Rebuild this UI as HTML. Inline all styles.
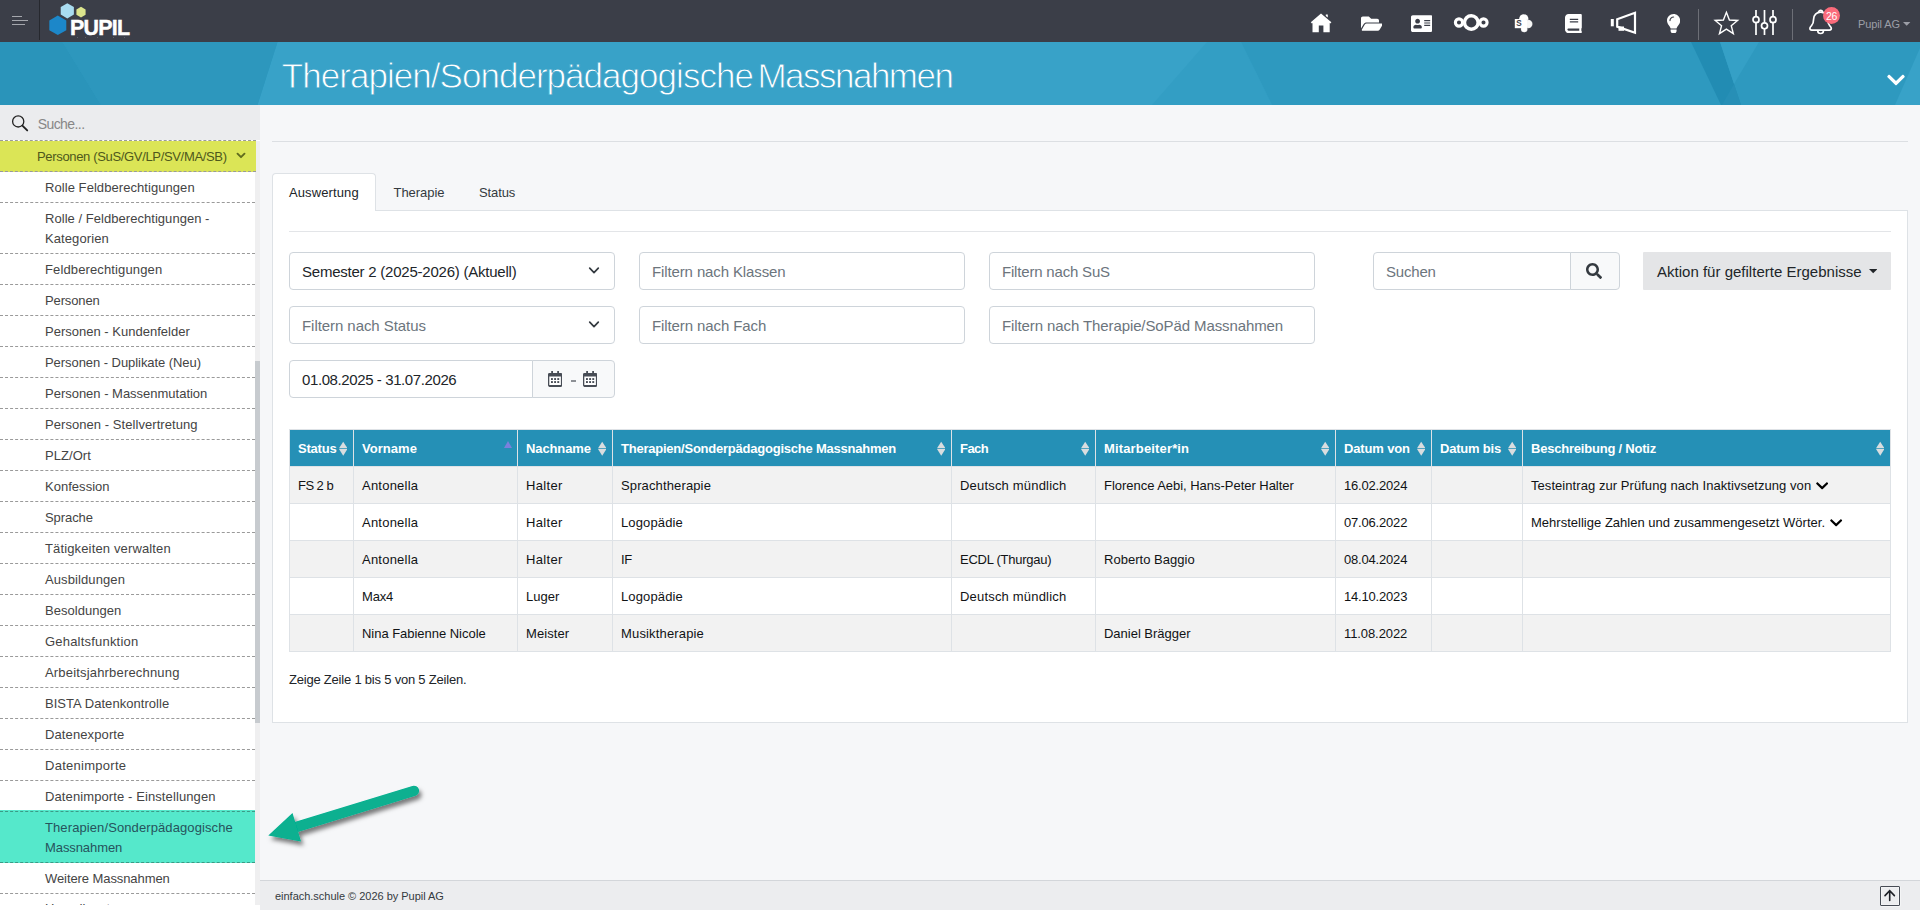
<!DOCTYPE html>
<html lang="de"><head><meta charset="utf-8"><title>Therapien/Sonderpädagogische Massnahmen</title>
<style>
*{box-sizing:border-box;margin:0;padding:0}
html,body{width:1920px;height:911px;overflow:hidden;background:#fff;font-family:"Liberation Sans",sans-serif}
body{font-family:"Liberation Sans",sans-serif;font-size:13px;color:#212529;position:relative}
.ab{position:absolute}
.t{position:absolute;white-space:nowrap;line-height:20px}
#nav{position:absolute;left:0;top:0;width:1920px;height:42px;background:#3b3e48}
#banner{position:absolute;left:0;top:42px;width:1920px;height:63px;background:#2f9ac0;overflow:hidden}
#side{position:absolute;left:0;top:105px;width:260px;height:800px;background:#fff;overflow:hidden}
#main{position:absolute;left:260px;top:105px;width:1660px;height:775px;background:#f6f7f9}
#footer{position:absolute;left:260px;top:880px;width:1660px;height:30px;background:#ecedef;border-top:1px solid #d3d6da}
.si{position:absolute;left:0;width:255px;border-bottom:1px dashed #9a9a9a;color:#444;font-size:13px;line-height:20px;padding:6px 0 4px 45px}
.inp{position:absolute;height:38px;background:#fff;border:1px solid #ced4da;border-radius:4px;font-size:15px;line-height:37.5px;padding-left:12px;white-space:nowrap;letter-spacing:-.1px;overflow:hidden}
.ph{color:#6c757d}
.th{position:absolute;top:430px;height:36px;background:#2590b6;color:#fff;font-weight:700;font-size:13px;line-height:38px;padding-left:8px;white-space:nowrap;overflow:hidden}
.td{position:absolute;height:36px;font-size:13px;line-height:38px;padding-left:8px;white-space:nowrap;color:#111315;overflow:hidden}
.vl{position:absolute;width:1px;background:#dee2e6}
.hl{position:absolute;height:1px;background:#dee2e6}
</style></head><body>

<div id="nav">
<div class="ab" style="left:12px;top:16px;width:10px;height:1px;background:#a5a7ad"></div>
<div class="ab" style="left:12px;top:20px;width:16px;height:1px;background:#a5a7ad"></div>
<div class="ab" style="left:12px;top:24px;width:13px;height:1px;background:#a5a7ad"></div>
<div class="ab" style="left:39px;top:0;width:1px;height:40px;background:#26282e"></div>
<svg class="ab" style="left:0;top:0;width:160px;height:42px" viewBox="0 0 160 42"><polygon points="67.30,3.20 73.88,7.00 73.88,14.60 67.30,18.40 60.72,14.60 60.72,7.00" fill="#a9dcf0"/><polygon points="81.00,6.80 85.59,9.45 85.59,14.75 81.00,17.40 76.41,14.75 76.41,9.45" fill="#dce58d"/><polygon points="57.80,15.50 66.29,20.40 66.29,30.20 57.80,35.10 49.31,30.20 49.31,20.40" fill="#1c87c9"/></svg>
<div class="t" style="left:70px;top:16.200px;font-size:21.400px;font-weight:700;color:#fff;line-height:24px;letter-spacing:-.75px;-webkit-text-stroke:.45px #fff">PUPIL</div>
<div class="ab" style="left:76.5px;top:37px;width:1px;height:1.200px;background:#5d606a"></div>
<div class="ab" style="left:85px;top:37px;width:1px;height:1.200px;background:#5d606a"></div>
<div class="ab" style="left:96.5px;top:37px;width:1px;height:1.200px;background:#5d606a"></div>
<div class="ab" style="left:112.5px;top:37px;width:1px;height:1.200px;background:#5d606a"></div>
<div class="ab" style="left:124px;top:37px;width:1px;height:1.200px;background:#5d606a"></div>
<svg class="ab" style="left:1309px;top:12px;width:24px;height:22px" viewBox="0 0 24 22"><path fill="#fff" d="M12 1.400 L22.400 10.300 L21.300 11.600 L20.700 11.100 V20.300 H14.400 V13.400 H9.800 V20.300 H3.500 V11.100 L2.900 11.600 L1.800 10.300 Z M16.800 2.600 H18.800 V5.600 L16.800 3.900 Z"/></svg>
<svg class="ab" style="left:1360.8px;top:13.9px;width:21.6px;height:19.2px" viewBox="0 0 576 512" preserveAspectRatio="none" ><path fill="#fff" d="M572.694 292.093L500.270 416.248A63.997 63.997 0 0 1 444.989 448H45.025c-18.523 0-30.064-20.093-20.731-36.093l72.424-124.155A64 64 0 0 1 152 256h399.964c18.523 0 30.064 20.093 20.730 36.093zM152 224h328v-48c0-26.510-21.490-48-48-48H272l-64-64H48C21.490 64 0 85.490 0 112v278.046l69.077-118.418C86.214 242.250 117.989 224 152 224z"/></svg>
<svg class="ab" style="left:1410.8px;top:14.0px;width:21.6px;height:19.2px" viewBox="0 0 576 512" preserveAspectRatio="none" ><path fill="#fff" d="M528 32H48C21.500 32 0 53.500 0 80v352c0 26.500 21.500 48 48 48h480c26.500 0 48-21.500 48-48V80c0-26.500-21.500-48-48-48zm-352 96c35.300 0 64 28.700 64 64s-28.700 64-64 64-64-28.700-64-64 28.700-64 64-64zm112 236.800c0 10.600-10 19.200-22.400 19.200H86.400C74 384 64 375.400 64 364.800v-19.200c0-31.800 30.100-57.600 67.200-57.600h5c12.300 5.100 25.700 8 39.800 8s27.600-2.900 39.800-8h5c37.100 0 67.200 25.800 67.200 57.600v19.200zM512 312c0 4.400-3.600 8-8 8H360c-4.400 0-8-3.600-8-8v-16c0-4.400 3.600-8 8-8h144c4.400 0 8 3.600 8 8v16zm0-64c0 4.400-3.600 8-8 8H360c-4.400 0-8-3.600-8-8v-16c0-4.400 3.600-8 8-8h144c4.400 0 8 3.600 8 8v16zm0-64c0 4.400-3.600 8-8 8H360c-4.400 0-8-3.600-8-8v-16c0-4.400 3.600-8 8-8h144c4.400 0 8 3.600 8 8v16z"/></svg>
<svg class="ab" style="left:1450px;top:10px;width:42px;height:25px" viewBox="0 0 42 25"><g fill="none" stroke="#fff"><circle cx="21.3" cy="12.5" r="6.8" stroke-width="3.4"/><circle cx="9" cy="12.5" r="3.6" stroke-width="3.1"/><circle cx="33.5" cy="12.5" r="3.6" stroke-width="3.1"/></g></svg>
<svg class="ab" style="left:1512px;top:12px;width:24px;height:24px" viewBox="0 0 24 24"><circle cx="11.8" cy="6.8" r="4.6" fill="#fff"/><circle cx="16.3" cy="12" r="4.2" fill="#f6f6f6" stroke="#3b3e48" stroke-opacity=".22" stroke-width=".5"/><circle cx="12.2" cy="17" r="3.3" fill="#fff" stroke="#3b3e48" stroke-opacity=".22" stroke-width=".5"/><rect x="2.8" y="7" width="7.6" height="9.2" fill="#fff"/><rect x="9" y="8" width="6" height="8" fill="#fff"/><text x="6.9" y="14.1" font-family="Liberation Sans" font-weight="700" font-size="8.2" fill="#3b3e48" text-anchor="middle">S</text></svg>
<svg class="ab" style="left:1565.3px;top:13.6px;width:16.8px;height:19.2px" viewBox="0 0 448 512" preserveAspectRatio="none" ><path fill="#fff" d="M448 360V24c0-13.300-10.700-24-24-24H96C43 0 0 43 0 96v320c0 53 43 96 96 96h328c13.300 0 24-10.700 24-24v-16c0-7.500-3.500-14.300-8.900-18.700-4.200-15.400-4.200-59.300 0-74.700 5.400-4.300 8.900-11.100 8.900-18.600zM128 134c0-3.300 2.700-6 6-6h212c3.300 0 6 2.700 6 6v20c0 3.300-2.700 6-6 6H134c-3.300 0-6-2.700-6-6v-20zm0 64c0-3.300 2.700-6 6-6h212c3.300 0 6 2.700 6 6v20c0 3.300-2.700 6-6 6H134c-3.300 0-6-2.700-6-6v-20zm253.400 250H96c-17.700 0-32-14.300-32-32 0-17.600 14.400-32 32-32h285.400c-1.900 17.100-1.900 46.900 0 64z"/></svg>
<svg class="ab" style="left:1608px;top:9px;width:32px;height:28px" viewBox="0 0 32 28"><g fill="none" stroke="#fff" stroke-width="2.2" stroke-linejoin="miter"><path d="M9.2 10.3 L27 3.8 V23.8 L9.2 17.6 Z"/></g><rect x="2.8" y="10" width="3" height="7.3" fill="#fff"/><rect x="10.5" y="17.5" width="5.5" height="4.3" fill="#fff"/></svg>
<svg class="ab" style="left:1666.8px;top:13.7px;width:13.2px;height:19.2px" viewBox="0 0 352 512" preserveAspectRatio="none" ><path fill="#fff" d="M96.060 454.350c.01 6.290 1.870 12.450 5.360 17.690l17.090 25.690a31.990 31.990 0 0 0 26.640 14.280h61.710a31.990 31.990 0 0 0 26.640-14.280l17.090-25.690a31.989 31.989 0 0 0 5.360-17.690l.04-38.350H96.010l.05 38.350zM0 176c0 44.370 16.450 84.850 43.560 115.780 16.520 18.850 42.360 58.230 52.210 91.450.04.26.07.52.11.78h160.240c.04-.26.07-.51.11-.78 9.850-33.220 35.690-72.600 52.210-91.450C335.550 260.850 352 220.370 352 176 352 78.610 272.910-.3 175.450 0 73.440.31 0 82.970 0 176zm176-80c-44.110 0-80 35.890-80 80 0 8.840-7.160 16-16 16s-16-7.160-16-16c0-61.760 50.240-112 112-112 8.840 0 16 7.160 16 16s-7.160 16-16 16z"/></svg>
<div class="ab" style="left:1698px;top:9px;width:1px;height:31px;background:#6d6f77"></div>
<svg class="ab" style="left:1710px;top:6px;width:34px;height:34px" viewBox="0 0 34 34"><polygon points="16.40,6.30 19.40,13.97 27.62,14.45 21.25,19.68 23.34,27.65 16.40,23.20 9.46,27.65 11.55,19.68 5.18,14.45 13.40,13.97" fill="none" stroke="#fff" stroke-width="1.4" stroke-linejoin="miter"/></svg>
<svg class="ab" style="left:1750px;top:6px;width:30px;height:32px" viewBox="0 0 30 32"><g stroke="#fff" stroke-width="1.7" fill="#3b3e48"><path d="M6 4 V29 M14.5 4 V29 M23 4 V29" fill="none"/><circle cx="6" cy="13.7" r="3"/><circle cx="14.5" cy="19.8" r="3"/><circle cx="23" cy="13.7" r="3"/></g></svg>
<div class="ab" style="left:1792px;top:9px;width:1px;height:31px;background:#6d6f77"></div>
<svg class="ab" style="left:1806px;top:6px;width:30px;height:32px" viewBox="0 0 30 32"><g fill="none" stroke="#fff" stroke-width="1.700" stroke-linejoin="round" stroke-linecap="round"><path d="M3.900 22.300 C3.900 21.200 4.600 20.600 5.400 19.800 C7 18.200 7.600 16.400 7.600 13.200 C7.600 8.800 10.600 6.200 14.600 6.200 C18.600 6.200 21.600 8.800 21.600 13.200 C21.600 16.400 22.200 18.200 23.800 19.800 C24.600 20.600 25.300 21.200 25.300 22.300 C25.300 23.600 24.400 24.200 23.400 24.200 H5.800 C4.800 24.200 3.900 23.600 3.900 22.300 Z"/><path d="M12.700 6.300 C12.700 3.600 16.500 3.600 16.500 6.300"/><path d="M11.800 25 C11.900 28.300 17.300 28.300 17.400 25"/></g></svg>
<div class="ab" style="left:1823px;top:7px;width:17px;height:17px;border-radius:50%;background:#fa6b7b"></div>
<div class="t" style="left:1823px;top:7.800px;width:17px;text-align:center;font-size:10.500px;color:#fff;line-height:17px;letter-spacing:-.3px">26</div>
<div class="t" style="left:1858px;top:14px;font-size:11px;color:#9c9ea7;line-height:20px;letter-spacing:-.12px">Pupil AG</div>
<svg class="ab" style="left:1903px;top:22px;width:8px;height:4px" viewBox="0 0 8 4"><polygon points="0,0 7.4,0 3.700,3.800" fill="#9c9ea7"/></svg>
</div>
<div id="banner"><svg class="ab" style="left:0;top:0;width:1920px;height:63px" viewBox="0 0 1920 63"><polygon points="257.500,63 277.500,0 1920,0 1920,63" fill="#38a2c8"/><polygon points="0,0 62.500,0 101,63 0,63" fill="#2a94ba"/><polygon points="62.500,0 277.500,0 257.500,63 101,63" fill="#2d97bd"/><polygon points="1207,0 1241,0 1272,63 1152,63" fill="#339ec4"/><polygon points="1241,0 1920,0 1920,63 1272,63" fill="#2e99bf"/><polygon points="1691,0 1720,0 1741,63 1721,63" fill="#228cb3"/><polygon points="1720,0 1759,0 1734,42" fill="#35a0c6"/><polygon points="1734,42 1741,63 1722,63" fill="#278fb6"/><polygon points="1920,6 1920,63 1895,63" fill="#38a2c8"/></svg>
<div class="t" style="left:281.800px;top:14px;font-size:35px;line-height:40px;color:#fff;letter-spacing:-0.963px;-webkit-text-stroke:.85px #38a2c8">Therapien/Sonderpädagogische</div>
<div class="t" style="left:757.400px;top:14px;font-size:35px;line-height:40px;color:#fff;letter-spacing:-1.511px;-webkit-text-stroke:.85px #38a2c8">Massnahmen</div>
<svg class="ab" style="left:1887px;top:27.5px;width:18px;height:20px" viewBox="0 0 448 512" preserveAspectRatio="none" ><path fill="#fff" d="M207.029 381.476L12.686 187.132c-9.373-9.373-9.373-24.569 0-33.941l22.667-22.667c9.357-9.357 24.522-9.375 33.901-.04L224 284.505l154.745-154.021c9.379-9.335 24.544-9.317 33.901.04l22.667 22.667c9.373 9.373 9.373 24.569 0 33.941L240.971 381.476c-9.373 9.372-24.569 9.372-33.942 0z"/></svg>
</div>
<div id="side">
<div class="ab" style="left:0;top:0;width:260px;height:35px;background:#ebecee"></div>
<div class="ab" style="left:0;top:35px;width:256px;height:1px;border-top:1px dashed #9a9a9a"></div>
<svg class="ab" style="left:10px;top:8px;width:20px;height:20px" viewBox="0 0 20 20"><circle cx="8.2" cy="8.400" r="5.600" fill="none" stroke="#222" stroke-width="1.3"/><path d="M12.400 12.600 L17.200 17.400" stroke="#222" stroke-width="1.900" stroke-linecap="round"/></svg>
<div class="t" style="left:37.700px;top:8.600px;font-size:14px;color:#878787;letter-spacing:-0.571px">Suche...</div>
<div class="ab" style="left:255px;top:36px;width:5px;height:764px;background:#efeff0"></div>
<div class="ab" style="left:255px;top:256px;width:5px;height:362px;background:#c7cbcf"></div>
<div class="si" style="top:36px;width:256px;background:#dbe556;color:#4e581c;padding-left:37px"><span style="letter-spacing:-0.337px">Personen (SuS/GV/LP/SV/MA/SB)</span></div>
<svg class="ab" style="left:235px;top:46px;width:12px;height:10px" viewBox="0 0 12 10"><path d="M2.500 2.700 L6 6.200 L9.500 2.700" fill="none" stroke="#606b1e" stroke-width="1.900" stroke-linecap="round" stroke-linejoin="round"/></svg>
<div class="si" style="top:67px"><span style="letter-spacing:0.064px">Rolle Feldberechtigungen</span></div>
<div class="si" style="top:98px"><span style="letter-spacing:0.042px">Rolle / Feldberechtigungen -</span><br><span style="letter-spacing:0.092px">Kategorien</span></div>
<div class="si" style="top:149px"><span style="letter-spacing:0.132px">Feldberechtigungen</span></div>
<div class="si" style="top:180px"><span style="letter-spacing:-0.119px">Personen</span></div>
<div class="si" style="top:211px"><span style="letter-spacing:0.011px">Personen - Kundenfelder</span></div>
<div class="si" style="top:242px"><span style="letter-spacing:-0.059px">Personen - Duplikate (Neu)</span></div>
<div class="si" style="top:273px"><span style="letter-spacing:-0.011px">Personen - Massenmutation</span></div>
<div class="si" style="top:304px"><span style="letter-spacing:0.057px">Personen - Stellvertretung</span></div>
<div class="si" style="top:335px"><span style="letter-spacing:0.056px">PLZ/Ort</span></div>
<div class="si" style="top:366px"><span style="letter-spacing:0.028px">Konfession</span></div>
<div class="si" style="top:397px"><span style="letter-spacing:-0.075px">Sprache</span></div>
<div class="si" style="top:428px"><span style="letter-spacing:0.141px">Tätigkeiten verwalten</span></div>
<div class="si" style="top:459px"><span style="letter-spacing:0.101px">Ausbildungen</span></div>
<div class="si" style="top:490px"><span style="letter-spacing:0.045px">Besoldungen</span></div>
<div class="si" style="top:521px"><span style="letter-spacing:0.204px">Gehaltsfunktion</span></div>
<div class="si" style="top:552px"><span style="letter-spacing:0.18px">Arbeitsjahrberechnung</span></div>
<div class="si" style="top:583px"><span style="letter-spacing:0.044px">BISTA Datenkontrolle</span></div>
<div class="si" style="top:614px"><span style="letter-spacing:0.112px">Datenexporte</span></div>
<div class="si" style="top:645px"><span style="letter-spacing:0.272px">Datenimporte</span></div>
<div class="si" style="top:676px"><span style="letter-spacing:0.105px">Datenimporte - Einstellungen</span></div>
<div class="si" style="top:705px;height:53px;padding-top:8px;background:#55e8cb;color:#27535c;border-bottom-color:#3c9a86"><span style="letter-spacing:0.102px">Therapien/Sonderpädagogische</span><br><span style="letter-spacing:-0.084px">Massnahmen</span><div class="ab" style="left:0;top:1px;width:255px;height:0;border-top:1px dashed #3c9a86"></div></div>
<div class="si" style="top:758px"><span style="letter-spacing:-0.084px">Weitere Massnahmen</span></div>
<div class="si" style="top:789px;padding-top:4.600px">Hausdienst</div>
</div>
<div id="main"></div>
<div class="hl" style="left:272px;top:141px;width:1636px;background:#dcdfe3"></div>
<div class="ab" style="left:272px;top:210px;width:1636px;height:513px;background:#fff;border:1px solid #dee2e6"></div>
<div class="ab" style="left:272px;top:173px;width:104px;height:38px;background:#fff;border:1px solid #dee2e6;border-bottom:none;border-radius:4px 4px 0 0"></div>
<div class="t" style="left:289px;top:183px;font-size:13px;color:#212529;letter-spacing:.11px">Auswertung</div>
<div class="t" style="left:393.500px;top:183px;font-size:13px;color:#343a40;letter-spacing:-.05px">Therapie</div>
<div class="t" style="left:479px;top:183px;font-size:13px;color:#343a40;letter-spacing:-.11px">Status</div>
<div class="hl" style="left:289px;top:231px;width:1602px;background:#e3e5e8"></div>
<div class="inp" style="left:289px;top:252px;width:326px;letter-spacing:-0.23px">Semester 2 (2025-2026) (Aktuell)</div>
<div class="inp ph" style="left:639px;top:252px;width:326px;letter-spacing:-0.12px">Filtern nach Klassen</div>
<div class="inp ph" style="left:989px;top:252px;width:326px;letter-spacing:-0.19px">Filtern nach SuS</div>
<div class="inp ph" style="left:289px;top:306px;width:326px;letter-spacing:-0.06px">Filtern nach Status</div>
<div class="inp ph" style="left:639px;top:306px;width:326px;letter-spacing:-0.1px">Filtern nach Fach</div>
<div class="inp ph" style="left:989px;top:306px;width:326px;letter-spacing:-0.1px">Filtern nach Therapie/SoPäd Massnahmen</div>
<div class="inp" style="left:289px;top:360px;width:244px;letter-spacing:-0.4px;border-radius:4px 0 0 4px">01.08.2025 - 31.07.2026</div>
<div class="ab" style="left:532px;top:360px;width:83px;height:38px;background:#f8f9fa;border:1px solid #ced4da;border-radius:0 4px 4px 0"></div>
<svg class="ab" style="left:548px;top:371px;width:14.200px;height:16px" viewBox="0 0 14.200 16"><rect x="0.650" y="2.650" width="12.900" height="12.600" rx="1.300" fill="#fff" stroke="#484d56" stroke-width="1.300"/><path d="M0 5.400 V3.500 Q0 2 1.500 2 H12.700 Q14.200 2 14.200 3.500 V5.400 Z" fill="#484d56"/><rect x="3.200" y="0" width="1.800" height="3" fill="#484d56"/><rect x="9.200" y="0" width="1.800" height="3" fill="#484d56"/><rect x="0.600" y="14" width="13" height="1.800" rx=".8" fill="#484d56"/><rect x="3" y="7.1" width="1.900" height="1.900" fill="#484d56"/><rect x="3" y="10.1" width="1.900" height="1.900" fill="#484d56"/><rect x="6.15" y="7.1" width="1.900" height="1.900" fill="#484d56"/><rect x="6.15" y="10.1" width="1.900" height="1.900" fill="#484d56"/><rect x="9.3" y="7.1" width="1.900" height="1.900" fill="#484d56"/><rect x="9.3" y="10.1" width="1.900" height="1.900" fill="#484d56"/></svg>
<svg class="ab" style="left:583px;top:371px;width:14.200px;height:16px" viewBox="0 0 14.200 16"><rect x="0.650" y="2.650" width="12.900" height="12.600" rx="1.300" fill="#fff" stroke="#484d56" stroke-width="1.300"/><path d="M0 5.400 V3.500 Q0 2 1.500 2 H12.700 Q14.200 2 14.200 3.500 V5.400 Z" fill="#484d56"/><rect x="3.200" y="0" width="1.800" height="3" fill="#484d56"/><rect x="9.200" y="0" width="1.800" height="3" fill="#484d56"/><rect x="0.600" y="14" width="13" height="1.800" rx=".8" fill="#484d56"/><rect x="3" y="7.1" width="1.900" height="1.900" fill="#484d56"/><rect x="3" y="10.1" width="1.900" height="1.900" fill="#484d56"/><rect x="6.15" y="7.1" width="1.900" height="1.900" fill="#484d56"/><rect x="6.15" y="10.1" width="1.900" height="1.900" fill="#484d56"/><rect x="9.3" y="7.1" width="1.900" height="1.900" fill="#484d56"/><rect x="9.3" y="10.1" width="1.900" height="1.900" fill="#484d56"/></svg>
<div class="ab" style="left:571.300px;top:380.300px;width:4.500px;height:1.600px;background:#8d9095"></div>
<svg class="ab" style="left:587px;top:266.4px;width:14px;height:10px" viewBox="0 0 14 10"><path d="M2.700 2.200 L7 6.600 L11.300 2.200" fill="none" stroke="#343a40" stroke-width="1.700" stroke-linecap="round" stroke-linejoin="round"/></svg>
<svg class="ab" style="left:587px;top:320.4px;width:14px;height:10px" viewBox="0 0 14 10"><path d="M2.700 2.200 L7 6.600 L11.300 2.200" fill="none" stroke="#343a40" stroke-width="1.700" stroke-linecap="round" stroke-linejoin="round"/></svg>
<div class="inp ph" style="left:1373px;top:252px;width:198px;letter-spacing:-0.2px;border-radius:4px 0 0 4px">Suchen</div>
<div class="ab" style="left:1570px;top:252px;width:50px;height:38px;background:#f8f9fa;border:1px solid #ced4da;border-radius:0 4px 4px 0"></div>
<svg class="ab" style="left:1586px;top:263px;width:16px;height:16px" viewBox="0 0 512 512" preserveAspectRatio="none" ><path fill="#343a40" d="M505 442.700L405.300 343c-4.500-4.500-10.600-7-17-7H372c27.600-35.300 44-79.700 44-128C416 93.100 322.900 0 208 0S0 93.100 0 208s93.100 208 208 208c48.300 0 92.700-16.400 128-44v16.300c0 6.400 2.500 12.500 7 17l99.700 99.700c9.400 9.400 24.600 9.400 33.900 0l28.300-28.300c9.400-9.400 9.400-24.600.1-34zM208 336c-70.700 0-128-57.200-128-128 0-70.700 57.200-128 128-128 70.700 0 128 57.200 128 128 0 70.700-57.200 128-128 128z"/></svg>
<div class="ab" style="left:1643px;top:252px;width:248px;height:38px;background:#e4e5e7;border-radius:1px"></div>
<div class="t" style="left:1657px;top:261.500px;font-size:15px;color:#212529;letter-spacing:.01px">Aktion für gefilterte Ergebnisse</div>
<svg class="ab" style="left:1869px;top:269.300px;width:8.400px;height:4.400px" viewBox="0 0 10 5"><polygon points="0,0 10,0 5,5" fill="#212529"/></svg>
<div class="ab" style="left:289px;top:429px;width:1602px;height:223px;background:#dee2e6"></div>
<div class="th" style="left:290px;width:63px"><span style="letter-spacing:-0.205px">Status</span></div>
<svg class="ab" style="left:339px;top:440.800px;width:8.400px;height:15.300px" viewBox="0 0 9 15"><polygon points="4.500,0 9,7 0,7" fill="#d9dddf"/><polygon points="0,8 9,8 4.500,15" fill="#d9dddf"/></svg>
<div class="th" style="left:354px;width:163px"><span style="letter-spacing:0.033px">Vorname</span></div>
<svg class="ab" style="left:503.5px;top:441px;width:8px;height:7px" viewBox="0 0 8 7"><polygon points="4,0 8,7 0,7" fill="#7b80dc"/></svg>
<div class="th" style="left:518px;width:94px"><span style="letter-spacing:-0.106px">Nachname</span></div>
<svg class="ab" style="left:598px;top:440.800px;width:8.400px;height:15.300px" viewBox="0 0 9 15"><polygon points="4.500,0 9,7 0,7" fill="#d9dddf"/><polygon points="0,8 9,8 4.500,15" fill="#d9dddf"/></svg>
<div class="th" style="left:613px;width:338px"><span style="letter-spacing:-0.228px">Therapien/Sonderpädagogische Massnahmen</span></div>
<svg class="ab" style="left:937px;top:440.800px;width:8.400px;height:15.300px" viewBox="0 0 9 15"><polygon points="4.500,0 9,7 0,7" fill="#d9dddf"/><polygon points="0,8 9,8 4.500,15" fill="#d9dddf"/></svg>
<div class="th" style="left:952px;width:143px"><span style="letter-spacing:-0.561px">Fach</span></div>
<svg class="ab" style="left:1081px;top:440.800px;width:8.400px;height:15.300px" viewBox="0 0 9 15"><polygon points="4.500,0 9,7 0,7" fill="#d9dddf"/><polygon points="0,8 9,8 4.500,15" fill="#d9dddf"/></svg>
<div class="th" style="left:1096px;width:239px"><span style="letter-spacing:0.152px">Mitarbeiter*in</span></div>
<svg class="ab" style="left:1321px;top:440.800px;width:8.400px;height:15.300px" viewBox="0 0 9 15"><polygon points="4.500,0 9,7 0,7" fill="#d9dddf"/><polygon points="0,8 9,8 4.500,15" fill="#d9dddf"/></svg>
<div class="th" style="left:1336px;width:95px"><span style="letter-spacing:-0.152px">Datum von</span></div>
<svg class="ab" style="left:1417px;top:440.800px;width:8.400px;height:15.300px" viewBox="0 0 9 15"><polygon points="4.500,0 9,7 0,7" fill="#d9dddf"/><polygon points="0,8 9,8 4.500,15" fill="#d9dddf"/></svg>
<div class="th" style="left:1432px;width:90px"><span style="letter-spacing:-0.205px">Datum bis</span></div>
<svg class="ab" style="left:1508px;top:440.800px;width:8.400px;height:15.300px" viewBox="0 0 9 15"><polygon points="4.500,0 9,7 0,7" fill="#d9dddf"/><polygon points="0,8 9,8 4.500,15" fill="#d9dddf"/></svg>
<div class="th" style="left:1523px;width:367px"><span style="letter-spacing:-0.215px">Beschreibung / Notiz</span></div>
<svg class="ab" style="left:1876px;top:440.800px;width:8.400px;height:15.300px" viewBox="0 0 9 15"><polygon points="4.500,0 9,7 0,7" fill="#d9dddf"/><polygon points="0,8 9,8 4.500,15" fill="#d9dddf"/></svg>
<div class="td" style="left:290px;top:467px;width:63px;background:#f2f2f2"><span style="letter-spacing:-0.533px">FS 2 b</span></div>
<div class="td" style="left:354px;top:467px;width:163px;background:#f2f2f2"><span style="letter-spacing:0.221px">Antonella</span></div>
<div class="td" style="left:518px;top:467px;width:94px;background:#f2f2f2"><span style="letter-spacing:0.354px">Halter</span></div>
<div class="td" style="left:613px;top:467px;width:338px;background:#f2f2f2"><span style="letter-spacing:0.131px">Sprachtherapie</span></div>
<div class="td" style="left:952px;top:467px;width:143px;background:#f2f2f2"><span style="letter-spacing:0.192px">Deutsch mündlich</span></div>
<div class="td" style="left:1096px;top:467px;width:239px;background:#f2f2f2"><span style="letter-spacing:-0.03px">Florence Aebi, Hans-Peter Halter</span></div>
<div class="td" style="left:1336px;top:467px;width:95px;background:#f2f2f2"><span style="letter-spacing:-0.187px">16.02.2024</span></div>
<div class="td" style="left:1432px;top:467px;width:90px;background:#f2f2f2"></div>
<div class="td" style="left:1523px;top:467px;width:367px;background:#f2f2f2"><span style="letter-spacing:0.057px">Testeintrag zur Prüfung nach Inaktivsetzung von</span></div>
<div class="td" style="left:290px;top:504px;width:63px;background:#fff"></div>
<div class="td" style="left:354px;top:504px;width:163px;background:#fff"><span style="letter-spacing:0.221px">Antonella</span></div>
<div class="td" style="left:518px;top:504px;width:94px;background:#fff"><span style="letter-spacing:0.354px">Halter</span></div>
<div class="td" style="left:613px;top:504px;width:338px;background:#fff"><span style="letter-spacing:0.13px">Logopädie</span></div>
<div class="td" style="left:952px;top:504px;width:143px;background:#fff"></div>
<div class="td" style="left:1096px;top:504px;width:239px;background:#fff"></div>
<div class="td" style="left:1336px;top:504px;width:95px;background:#fff"><span style="letter-spacing:-0.187px">07.06.2022</span></div>
<div class="td" style="left:1432px;top:504px;width:90px;background:#fff"></div>
<div class="td" style="left:1523px;top:504px;width:367px;background:#fff"><span style="letter-spacing:0.014px">Mehrstellige Zahlen und zusammengesetzt Wörter.</span></div>
<div class="td" style="left:290px;top:541px;width:63px;background:#f2f2f2"></div>
<div class="td" style="left:354px;top:541px;width:163px;background:#f2f2f2"><span style="letter-spacing:0.221px">Antonella</span></div>
<div class="td" style="left:518px;top:541px;width:94px;background:#f2f2f2"><span style="letter-spacing:0.354px">Halter</span></div>
<div class="td" style="left:613px;top:541px;width:338px;background:#f2f2f2"><span style="letter-spacing:-0.326px">IF</span></div>
<div class="td" style="left:952px;top:541px;width:143px;background:#f2f2f2"><span style="letter-spacing:-0.256px">ECDL (Thurgau)</span></div>
<div class="td" style="left:1096px;top:541px;width:239px;background:#f2f2f2"><span style="letter-spacing:0.033px">Roberto Baggio</span></div>
<div class="td" style="left:1336px;top:541px;width:95px;background:#f2f2f2"><span style="letter-spacing:-0.187px">08.04.2024</span></div>
<div class="td" style="left:1432px;top:541px;width:90px;background:#f2f2f2"></div>
<div class="td" style="left:1523px;top:541px;width:367px;background:#f2f2f2"></div>
<div class="td" style="left:290px;top:578px;width:63px;background:#fff"></div>
<div class="td" style="left:354px;top:578px;width:163px;background:#fff"><span style="letter-spacing:-0.148px">Max4</span></div>
<div class="td" style="left:518px;top:578px;width:94px;background:#fff"><span style="letter-spacing:0.01px">Luger</span></div>
<div class="td" style="left:613px;top:578px;width:338px;background:#fff"><span style="letter-spacing:0.13px">Logopädie</span></div>
<div class="td" style="left:952px;top:578px;width:143px;background:#fff"><span style="letter-spacing:0.192px">Deutsch mündlich</span></div>
<div class="td" style="left:1096px;top:578px;width:239px;background:#fff"></div>
<div class="td" style="left:1336px;top:578px;width:95px;background:#fff"><span style="letter-spacing:-0.187px">14.10.2023</span></div>
<div class="td" style="left:1432px;top:578px;width:90px;background:#fff"></div>
<div class="td" style="left:1523px;top:578px;width:367px;background:#fff"></div>
<div class="td" style="left:290px;top:615px;width:63px;background:#f2f2f2"></div>
<div class="td" style="left:354px;top:615px;width:163px;background:#f2f2f2"><span style="letter-spacing:-0.03px">Nina Fabienne Nicole</span></div>
<div class="td" style="left:518px;top:615px;width:94px;background:#f2f2f2"><span style="letter-spacing:0.097px">Meister</span></div>
<div class="td" style="left:613px;top:615px;width:338px;background:#f2f2f2"><span style="letter-spacing:0.159px">Musiktherapie</span></div>
<div class="td" style="left:952px;top:615px;width:143px;background:#f2f2f2"></div>
<div class="td" style="left:1096px;top:615px;width:239px;background:#f2f2f2"><span style="letter-spacing:-0.016px">Daniel Brägger</span></div>
<div class="td" style="left:1336px;top:615px;width:95px;background:#f2f2f2"><span style="letter-spacing:-0.09px">11.08.2022</span></div>
<div class="td" style="left:1432px;top:615px;width:90px;background:#f2f2f2"></div>
<div class="td" style="left:1523px;top:615px;width:367px;background:#f2f2f2"></div>
<svg class="ab" style="left:1816.2px;top:479px;width:12.3px;height:13.6px" viewBox="0 0 448 512" preserveAspectRatio="none" ><path fill="#000" d="M207.029 381.476L12.686 187.132c-9.373-9.373-9.373-24.569 0-33.941l22.667-22.667c9.357-9.357 24.522-9.375 33.901-.04L224 284.505l154.745-154.021c9.379-9.335 24.544-9.317 33.901.04l22.667 22.667c9.373 9.373 9.373 24.569 0 33.941L240.971 381.476c-9.373 9.372-24.569 9.372-33.942 0z"/></svg>
<svg class="ab" style="left:1830.4px;top:516px;width:12.3px;height:13.6px" viewBox="0 0 448 512" preserveAspectRatio="none" ><path fill="#000" d="M207.029 381.476L12.686 187.132c-9.373-9.373-9.373-24.569 0-33.941l22.667-22.667c9.357-9.357 24.522-9.375 33.901-.04L224 284.505l154.745-154.021c9.379-9.335 24.544-9.317 33.901.04l22.667 22.667c9.373 9.373 9.373 24.569 0 33.941L240.971 381.476c-9.373 9.372-24.569 9.372-33.942 0z"/></svg>
<div class="t" style="left:289px;top:670px;font-size:13px;color:#212529;letter-spacing:-.21px">Zeige Zeile 1 bis 5 von 5 Zeilen.</div>
<div id="footer"></div>
<div class="t" style="left:275px;top:886px;font-size:11px;color:#343a40;letter-spacing:-.02px">einfach.schule © 2026 by Pupil AG</div>
<div class="ab" style="left:1879.500px;top:885.500px;width:21px;height:21px;border-radius:2px;background:#f4f5f6"></div>
<div class="ab" style="left:1880px;top:886px;width:20px;height:20px;background:#ecedef;border:1px solid #474c55;border-radius:1px;box-shadow:inset 0 0 0 .6px #f7f8f9"></div>
<svg class="ab" style="left:1882px;top:888px;width:16px;height:16px" viewBox="0 0 16 16"><path d="M7.700 12.500 V2.700 M3 7.600 L7.700 2.600 L12.400 7.600" fill="none" stroke="#1d2026" stroke-width="1.600" stroke-linecap="round" stroke-linejoin="miter"/></svg>
<svg class="ab" style="left:250px;top:770px;width:200px;height:100px;overflow:visible" viewBox="0 0 200 100"><g filter="url(#sh)"><filter id="sh" x="-20%" y="-20%" width="140%" height="160%"><feDropShadow dx="2.500" dy="4" stdDeviation="2.200" flood-color="#000" flood-opacity=".5"/></filter><path d="M163.900 20.900 L47 56.800" stroke="#07b090" stroke-width="10.400" stroke-linecap="round" fill="none"/><polygon points="18.300,65.500 42.500,43 51,71.600" fill="#07b090"/></g></svg>
</body></html>
